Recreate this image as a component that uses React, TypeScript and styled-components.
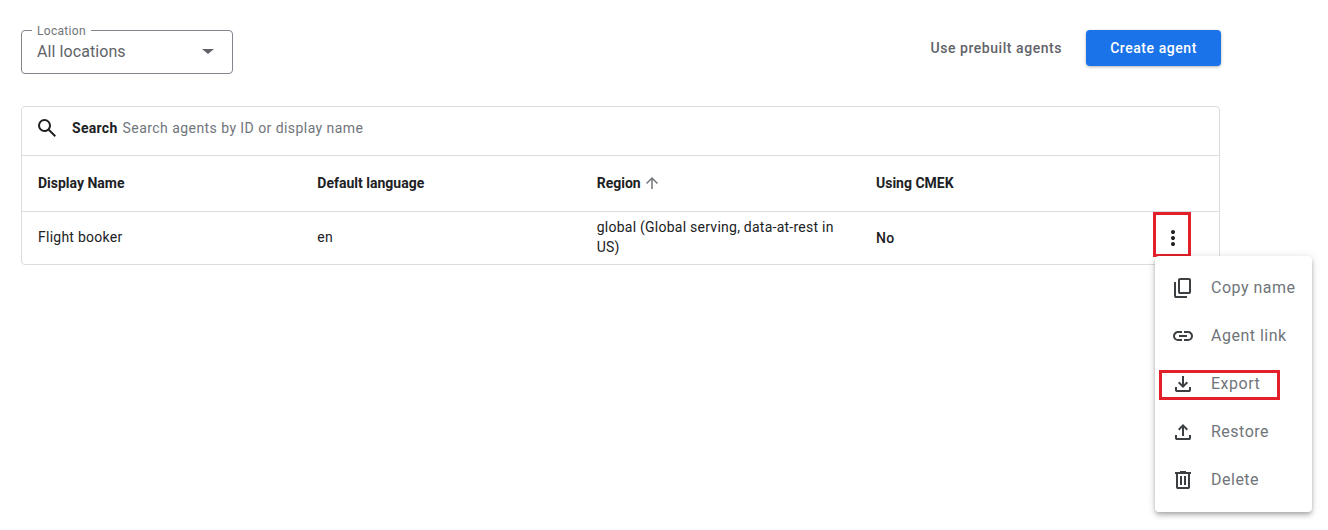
import styled, { createGlobalStyle } from "styled-components";

const GlobalStyle = createGlobalStyle`
  body {
    margin: 0;
    background: #fff;
    font-family: Roboto, "Liberation Sans", sans-serif;
  }
`;

const Page = styled.div`
  width: 1328px;
  height: 530px;
  box-sizing: border-box;
  padding: 30px 0 0 21px;
  overflow: hidden;
`;

const Toolbar = styled.div`
  width: 1200px;
  display: flex;
  justify-content: space-between;
  align-items: flex-start;
  margin-bottom: 32px;
`;

const LocationSelect = styled.div`
  position: relative;
  width: 212px;
  height: 44px;
  box-sizing: border-box;
  border: 1px solid #80868b;
  border-radius: 4px;
  display: flex;
  align-items: center;
  justify-content: space-between;
  padding: 0 18px 2px 15px;
`;

const FloatingLabel = styled.span`
  position: absolute;
  top: -7px;
  left: 10px;
  padding: 0 5px;
  background: #fff;
  font-size: 12px;
  line-height: 14px;
  letter-spacing: 0.3px;
  color: #70757a;
`;

const SelectValue = styled.span`
  font-size: 16px;
  letter-spacing: 0.08px;
  color: #5f6368;
`;

const Caret = styled.span`
  width: 0;
  height: 0;
  border-left: 6px solid transparent;
  border-right: 6px solid transparent;
  border-top: 5px solid #5f6368;
`;

const Actions = styled.div`
  display: flex;
  align-items: center;
  height: 36px;
  gap: 24px;
`;

const TextButton = styled.button`
  border: none;
  background: none;
  padding: 0;
  font-family: Roboto, sans-serif;
  font-size: 14px;
  font-weight: 500;
  letter-spacing: 0.55px;
  color: #5f6368;
`;

const PrimaryButton = styled.button`
  width: 135px;
  height: 36px;
  border: none;
  border-radius: 4px;
  background: #1a73e8;
  color: #fff;
  font-family: Roboto, sans-serif;
  font-size: 14px;
  font-weight: 500;
  letter-spacing: 0.55px;
  box-shadow: 0 1px 3px rgba(60, 64, 67, 0.4);
`;

const Panel = styled.div`
  width: 1199px;
  box-sizing: border-box;
  border: 1px solid #dadce0;
  border-radius: 4px;
`;

const SearchBar = styled.div`
  height: 49px;
  box-sizing: border-box;
  display: flex;
  align-items: center;
  padding: 0 0 6px 13px;
  font-size: 14px;
  letter-spacing: 0.44px;
  border-bottom: 1px solid #dadce0;
  color: #70757a;
`;

const SearchLabel = styled.b`
  margin: 0 5px 0 13px;
  font-weight: 700;
  letter-spacing: 0.3px;
  color: #202124;
`;

const Row = styled.div<{ $height: number; $bordered?: boolean }>`
  height: ${(p) => p.$height}px;
  display: grid;
  grid-template-columns: repeat(4, 279.33px) 1fr;
  align-items: center;
  padding: 0 0 2px 16px;
  box-sizing: border-box;
  border-bottom: ${(p) => (p.$bordered ? "1px solid #dadce0" : "none")};
`;

const HeadCell = styled.div`
  display: flex;
  align-items: center;
  gap: 2px;
  font-size: 14px;
  font-weight: 700;
  color: #202124;
`;

const Cell = styled.div<{ $medium?: boolean }>`
  font-size: 14px;
  line-height: 20px;
  letter-spacing: 0.25px;
  color: #202124;
  padding-right: 20px;
  font-weight: ${(p) => (p.$medium ? 500 : 400)};
  margin-top: ${(p) => (p.$medium ? 2 : 0)}px;
`;

const ActionCell = styled.div`
  position: relative;
  height: 24px;
  margin-top: 2px;
  display: flex;
  justify-content: flex-end;
  padding-right: 34px;
`;

const Icon = styled.svg.attrs({ viewBox: "0 -960 960 960" })<{
  $size?: number;
  $color?: string;
}>`
  display: block;
  flex: none;
  width: ${(p) => p.$size ?? 24}px;
  height: ${(p) => p.$size ?? 24}px;
  fill: ${(p) => p.$color ?? "#3c4043"};
`;

const RedBox = styled.div`
  position: absolute;
  box-sizing: border-box;
  border: 3px solid #e3202a;
  pointer-events: none;
`;

const DotsHighlight = styled(RedBox)`
  top: -14px;
  right: 28px;
  width: 38px;
  height: 45px;
`;

const ExportHighlight = styled(RedBox)`
  top: 10px;
  left: 4px;
  width: 121px;
  height: 30px;
`;

const Menu = styled.div`
  position: absolute;
  top: 30px;
  right: -93px;
  width: 157px;
  box-sizing: border-box;
  padding: 8px 0;
  background: #fff;
  border-radius: 4px;
  box-shadow: 0 2px 4px -1px rgba(0, 0, 0, 0.2), 0 4px 5px rgba(0, 0, 0, 0.14),
    0 1px 10px rgba(0, 0, 0, 0.12);
`;

const MenuItem = styled.div`
  position: relative;
  height: 48px;
  display: flex;
  align-items: center;
  gap: 16px;
  padding-left: 16px;
  font-size: 16px;
  letter-spacing: 0.5px;
  color: #70757a;
`;

const MenuLabel = styled.span`
  margin-bottom: 2px;
`;

const items = [
  {
    label: "Copy name",
    d: "M360-240q-33 0-56.5-23.5T280-320v-480q0-33 23.5-56.5T360-880h360q33 0 56.5 23.5T800-800v480q0 33-23.5 56.5T720-240H360Zm0-80h360v-480H360v480ZM200-80q-33 0-56.5-23.5T120-160v-560h80v560h440v80H200Zm160-240v-480 480Z",
  },
  {
    label: "Agent link",
    d: "M440-280H280q-83 0-141.5-58.5T80-480q0-83 58.5-141.5T280-680h160v80H280q-50 0-85 35t-35 85q0 50 35 85t85 35h160v80ZM320-440v-80h320v80H320Zm200 160v-80h160q50 0 85-35t35-85q0-50-35-85t-85-35H520v-80h160q83 0 141.5 58.5T880-480q0 83-58.5 141.5T680-280H520Z",
  },
  {
    label: "Export",
    d: "M480-320 280-520l56-58 104 104v-326h80v326l104-104 56 58-200 200ZM240-160q-33 0-56.5-23.5T160-240v-120h80v120h480v-120h80v120q0 33-23.5 56.5T720-160H240Z",
  },
  {
    label: "Restore",
    d: "M440-320v-326L336-542l-56-58 200-200 200 200-56 58-104-104v326h-80ZM240-160q-33 0-56.5-23.5T160-240v-120h80v120h480v-120h80v120q0 33-23.5 56.5T720-160H240Z",
  },
  {
    label: "Delete",
    d: "M280-120q-33 0-56.5-23.5T200-200v-520h-40v-80h200v-40h240v40h200v80h-40v520q0 33-23.5 56.5T680-120H280Zm400-600H280v520h400v-520ZM360-280h80v-360h-80v360Zm160 0h80v-360h-80v360ZM280-720v520-520Z",
  },
];

export default function App() {
  return (
    <Page>
      <GlobalStyle />
      <Toolbar>
        <LocationSelect>
          <FloatingLabel>Location</FloatingLabel>
          <SelectValue>All locations</SelectValue>
          <Caret />
        </LocationSelect>
        <Actions>
          <TextButton>Use prebuilt agents</TextButton>
          <PrimaryButton>Create agent</PrimaryButton>
        </Actions>
      </Toolbar>
      <Panel>
        <SearchBar>
          <Icon $color="#202124">
            <path d="M784-120 532-372q-30 24-69 38t-83 14q-109 0-184.5-75.5T120-580q0-109 75.5-184.5T380-840q109 0 184.5 75.5T640-580q0 44-14 83t-38 69l252 252-56 56ZM380-400q75 0 127.5-52.5T560-580q0-75-52.5-127.5T380-760q-75 0-127.5 52.5T200-580q0 75 52.5 127.5T380-400Z" />
          </Icon>
          <SearchLabel>Search</SearchLabel>
          Search agents by ID or display name
        </SearchBar>
        <Row $height={56} $bordered>
          <HeadCell>Display Name</HeadCell>
          <HeadCell>Default language</HeadCell>
          <HeadCell>
            Region
            <Icon $size={18} $color="#70757a">
              <path d="M440-160v-487L216-423l-56-57 320-320 320 320-56 57-224-224v487h-80Z" />
            </Icon>
          </HeadCell>
          <HeadCell>Using CMEK</HeadCell>
        </Row>
        <Row $height={52}>
          <Cell>Flight booker</Cell>
          <Cell>en</Cell>
          <Cell>global (Global serving, data-at-rest in US)</Cell>
          <Cell $medium>No</Cell>
          <ActionCell>
            <Icon $color="#202124">
              <path d="M480-160q-33 0-56.5-23.5T400-240q0-33 23.5-56.5T480-320q33 0 56.5 23.5T560-240q0 33-23.5 56.5T480-160Zm0-240q-33 0-56.5-23.5T400-480q0-33 23.5-56.5T480-560q33 0 56.5 23.5T560-480q0 33-23.5 56.5T480-400Zm0-240q-33 0-56.5-23.5T400-720q0-33 23.5-56.5T480-800q33 0 56.5 23.5T560-720q0 33-23.5 56.5T480-640Z" />
            </Icon>
            <DotsHighlight />
            <Menu>
              {items.map((item) => (
                <MenuItem key={item.label}>
                  <Icon>
                    <path d={item.d} />
                  </Icon>
                  <MenuLabel>{item.label}</MenuLabel>
                  {item.label === "Export" && <ExportHighlight />}
                </MenuItem>
              ))}
            </Menu>
          </ActionCell>
        </Row>
      </Panel>
    </Page>
  );
}
